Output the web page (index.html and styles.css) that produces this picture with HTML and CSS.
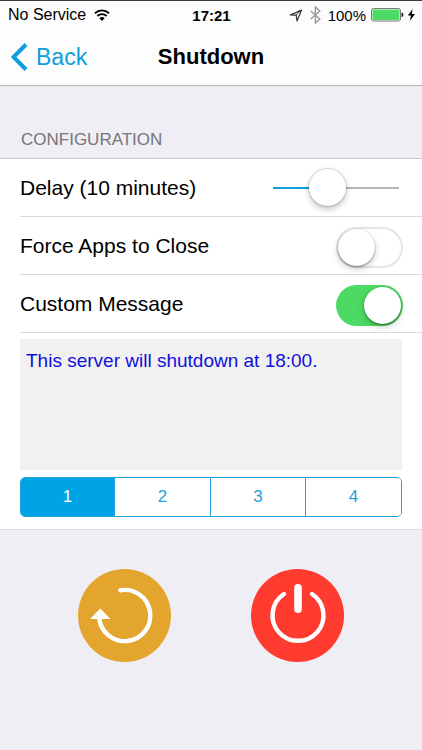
FILE: index.html
```
<!DOCTYPE html>
<html lang="en">
<head>
<meta charset="utf-8">
<meta name="viewport" content="width=device-width, initial-scale=1">
<title>Shutdown</title>
<link rel="stylesheet" href="styles.css">
</head>
<body>
<header class="top">
  <div class="status">
    <div class="status-side">
      <span class="carrier">No Service</span>
      <svg class="wifi" width="18" height="12" viewBox="0 0 18 12" aria-hidden="true">
        <path d="M2 4.2a10.2 10.2 0 0 1 14 0M4.4 7a6.6 6.6 0 0 1 9.2 0" fill="none" stroke="#000" stroke-width="1.9"/>
        <path d="M6.4 9.2a3.8 3.8 0 0 1 5.2 0L9 12z"/>
      </svg>
    </div>
    <time class="clock">17:21</time>
    <div class="status-side status-end">
      <svg width="14" height="13" viewBox="0 0 14 13" aria-hidden="true">
        <path d="M12.5 1L8 12 7.2 6.2 1.2 6z" fill="none" stroke="#333" stroke-width="1.2" stroke-linejoin="round"/>
        <path d="M12.5 1L7.2 6.2 1.2 6z" fill="#333"/>
        <path d="M9.8 2.9L6.8 5.4 4 5.4z" fill="#fdfdfd"/>
      </svg>
      <svg class="bluetooth" width="11" height="18" viewBox="0 0 11 18" aria-hidden="true">
        <path d="M.8 5l9 8-4.4 4V1l4.4 4-9 8" fill="none" stroke="#999" stroke-width="1.4"/>
      </svg>
      <span class="percent">100%</span>
      <svg class="battery" width="33" height="14" viewBox="0 0 33 14" aria-hidden="true">
        <rect x=".5" y=".5" width="29" height="12.5" rx="2" fill="#fff" stroke="#777"/>
        <rect x="1.5" y="1.5" width="27" height="10.5" rx="1" fill="#4cd964"/>
        <path d="M30.5 4.5q2 0 2 2.3t-2 2.3z" fill="#222"/>
      </svg>
      <svg width="7" height="12" viewBox="0 0 7 12" aria-hidden="true">
        <path d="M4.6 0L0 6.6h3L1.8 12 7 5H3.8z"/>
      </svg>
    </div>
  </div>
  <nav class="nav">
    <a class="back" href="#">
      <svg width="17" height="28" viewBox="0 0 17 28" aria-hidden="true">
        <path d="M15 1.5L2.5 14 15 26.5" fill="none" stroke="#0d9fdc" stroke-width="4"/>
      </svg>
      <span>Back</span>
    </a>
    <h1 class="title">Shutdown</h1>
  </nav>
</header>
<main>
  <h2 class="section-title">CONFIGURATION</h2>
  <section class="panel">
    <div class="row">
      <label for="delay">Delay (10 minutes)</label>
      <input class="slider" id="delay" type="range" min="0" max="25" value="10">
    </div>
    <div class="row">
      <label for="force">Force Apps to Close</label>
      <input class="switch" id="force" type="checkbox" role="switch">
    </div>
    <div class="row">
      <label for="custom">Custom Message</label>
      <input class="switch" id="custom" type="checkbox" role="switch" checked>
    </div>
    <div class="message-block">
      <textarea class="message" aria-label="Shutdown message" spellcheck="false">This server will shutdown at 18:00.</textarea>
      <div class="segments">
        <button class="segment selected" type="button" aria-pressed="true">1</button>
        <button class="segment" type="button" aria-pressed="false">2</button>
        <button class="segment" type="button" aria-pressed="false">3</button>
        <button class="segment" type="button" aria-pressed="false">4</button>
      </div>
    </div>
  </section>
  <div class="actions">
    <button class="action restart" type="button" aria-label="Restart">
      <svg width="93" height="93" viewBox="0 0 93 93" aria-hidden="true">
        <path d="M42.3 21.3A25.6 25.6 0 1 1 21.2 48.7" fill="none" stroke="#fff" stroke-width="4.4"/>
        <circle cx="42.4" cy="21.3" r="2.2" fill="#fff"/>
        <path d="M22.3 39.5L32.5 50H12z" fill="#fff"/>
      </svg>
    </button>
    <button class="action power" type="button" aria-label="Shut down">
      <svg width="93" height="93" viewBox="0 0 93 93" aria-hidden="true">
        <path d="M33 25a25.5 25.5 0 1 0 28 0" fill="none" stroke="#fff" stroke-width="4.4" stroke-linecap="round"/>
        <path d="M47 18.7v21.6" stroke="#fff" stroke-width="7.6" stroke-linecap="round"/>
      </svg>
    </button>
  </div>
</main>
</body>
</html>
```
FILE: styles.css
```
* {
  box-sizing: border-box;
}

body {
  margin: 0;
  min-height: 100vh;
  background: #efeef4;
  color: #000;
  font-family: "Liberation Sans", Arial, sans-serif;
  font-size: 21px;
}

.top {
  background: #fdfdfd;
  border-top: 1px solid #39383d;
  border-bottom: 1px solid #b4b3b8;
}

.status {
  display: grid;
  grid-template-columns: 1fr auto 1fr;
  align-items: center;
  height: 28px;
  padding: 0 7px 0 8px;
  font-size: 15px;
}

.status-side {
  display: flex;
  align-items: center;
  gap: 7px;
}

.status-end {
  justify-content: flex-end;
}

.carrier {
  font-size: 16px;
}

.clock {
  font-weight: bold;
}

.battery {
  margin-right: -3px;
  margin-left: -2px;
}

.nav {
  display: grid;
  grid-template-columns: 1fr auto 1fr;
  align-items: center;
  height: 56px;
  padding: 0 11px;
}

.back {
  display: flex;
  align-items: center;
  gap: 8px;
  color: #0d9fdc;
  font-size: 23px;
  text-decoration: none;
}

.title {
  margin: 0;
  font-size: 22px;
  font-weight: bold;
}

.section-title {
  margin: 0;
  padding: 43px 21px 8px;
  color: #76757b;
  font-size: 17px;
  font-weight: normal;
  line-height: 21px;
}

.panel {
  padding-left: 20px;
  background: #fff;
  border-top: 1px solid #c9c8ce;
  border-bottom: 1px solid #d9d8dd;
}

.row {
  display: flex;
  align-items: center;
  justify-content: space-between;
  height: 58px;
  padding-right: 19px;
  border-bottom: 1px solid #d9d9dc;
}

.slider {
  width: 126px;
  height: 38px;
  margin: 0 4px 0 0;
  appearance: none;
  background: linear-gradient(to right, #0d9fdc 43%, #b5b5b5 43%) center / 100% 2px no-repeat;
}

.slider::-webkit-slider-thumb {
  width: 37px;
  height: 37px;
  appearance: none;
  background: #fff;
  border-radius: 50%;
  box-shadow: 0 0 1px 1px rgba(0, 0, 0, 0.12), 0 3px 6px rgba(0, 0, 0, 0.25);
}

.switch {
  width: 67px;
  height: 41px;
  margin: 3px 0 0;
  padding: 2px;
  appearance: none;
  background: #fff;
  border-radius: 21px;
  box-shadow: inset 0 0 0 2px #e5e5e5;
}

.switch::before {
  display: block;
  width: 37px;
  height: 37px;
  background: #fff;
  border-radius: 50%;
  box-shadow: 0 1px 2px rgba(0, 0, 0, 0.4), 0 3px 7px rgba(0, 0, 0, 0.2);
  content: "";
}

.switch:checked {
  background: #4cd964;
  box-shadow: none;
}

.switch:checked::before {
  margin-left: auto;
}

.message-block {
  display: grid;
  gap: 7px;
  padding: 6px 20px 12px 0;
}

.message {
  display: block;
  width: 100%;
  height: 131px;
  padding: 10px 6px;
  border: 0;
  border-radius: 0;
  outline: 0;
  resize: none;
  background: #f1f1f1;
  color: #1010dc;
  font-family: inherit;
  font-size: 19px;
  line-height: 24px;
}

.segments {
  display: grid;
  grid-template-columns: 93fr 96fr 95fr 96fr;
  height: 40px;
  overflow: hidden;
  border: 1px solid #259fd9;
  border-radius: 5px;
}

.segment {
  padding: 0;
  border: 0;
  border-left: 1px solid #259fd9;
  background: #fff;
  color: #259fd9;
  font-family: inherit;
  font-size: 17px;
}

.segment:first-child {
  border-left: 0;
}

.segment.selected {
  background: #00a3e3;
  color: #fff;
}

.actions {
  display: flex;
  justify-content: center;
  gap: 80px;
  padding: 39px 0;
}

.action {
  width: 93px;
  height: 93px;
  padding: 0;
  border: 0;
  border-radius: 50%;
}

.action svg {
  display: block;
}

.restart {
  background: #e3a52e;
}

.power {
  background: #ff3b30;
}
```
